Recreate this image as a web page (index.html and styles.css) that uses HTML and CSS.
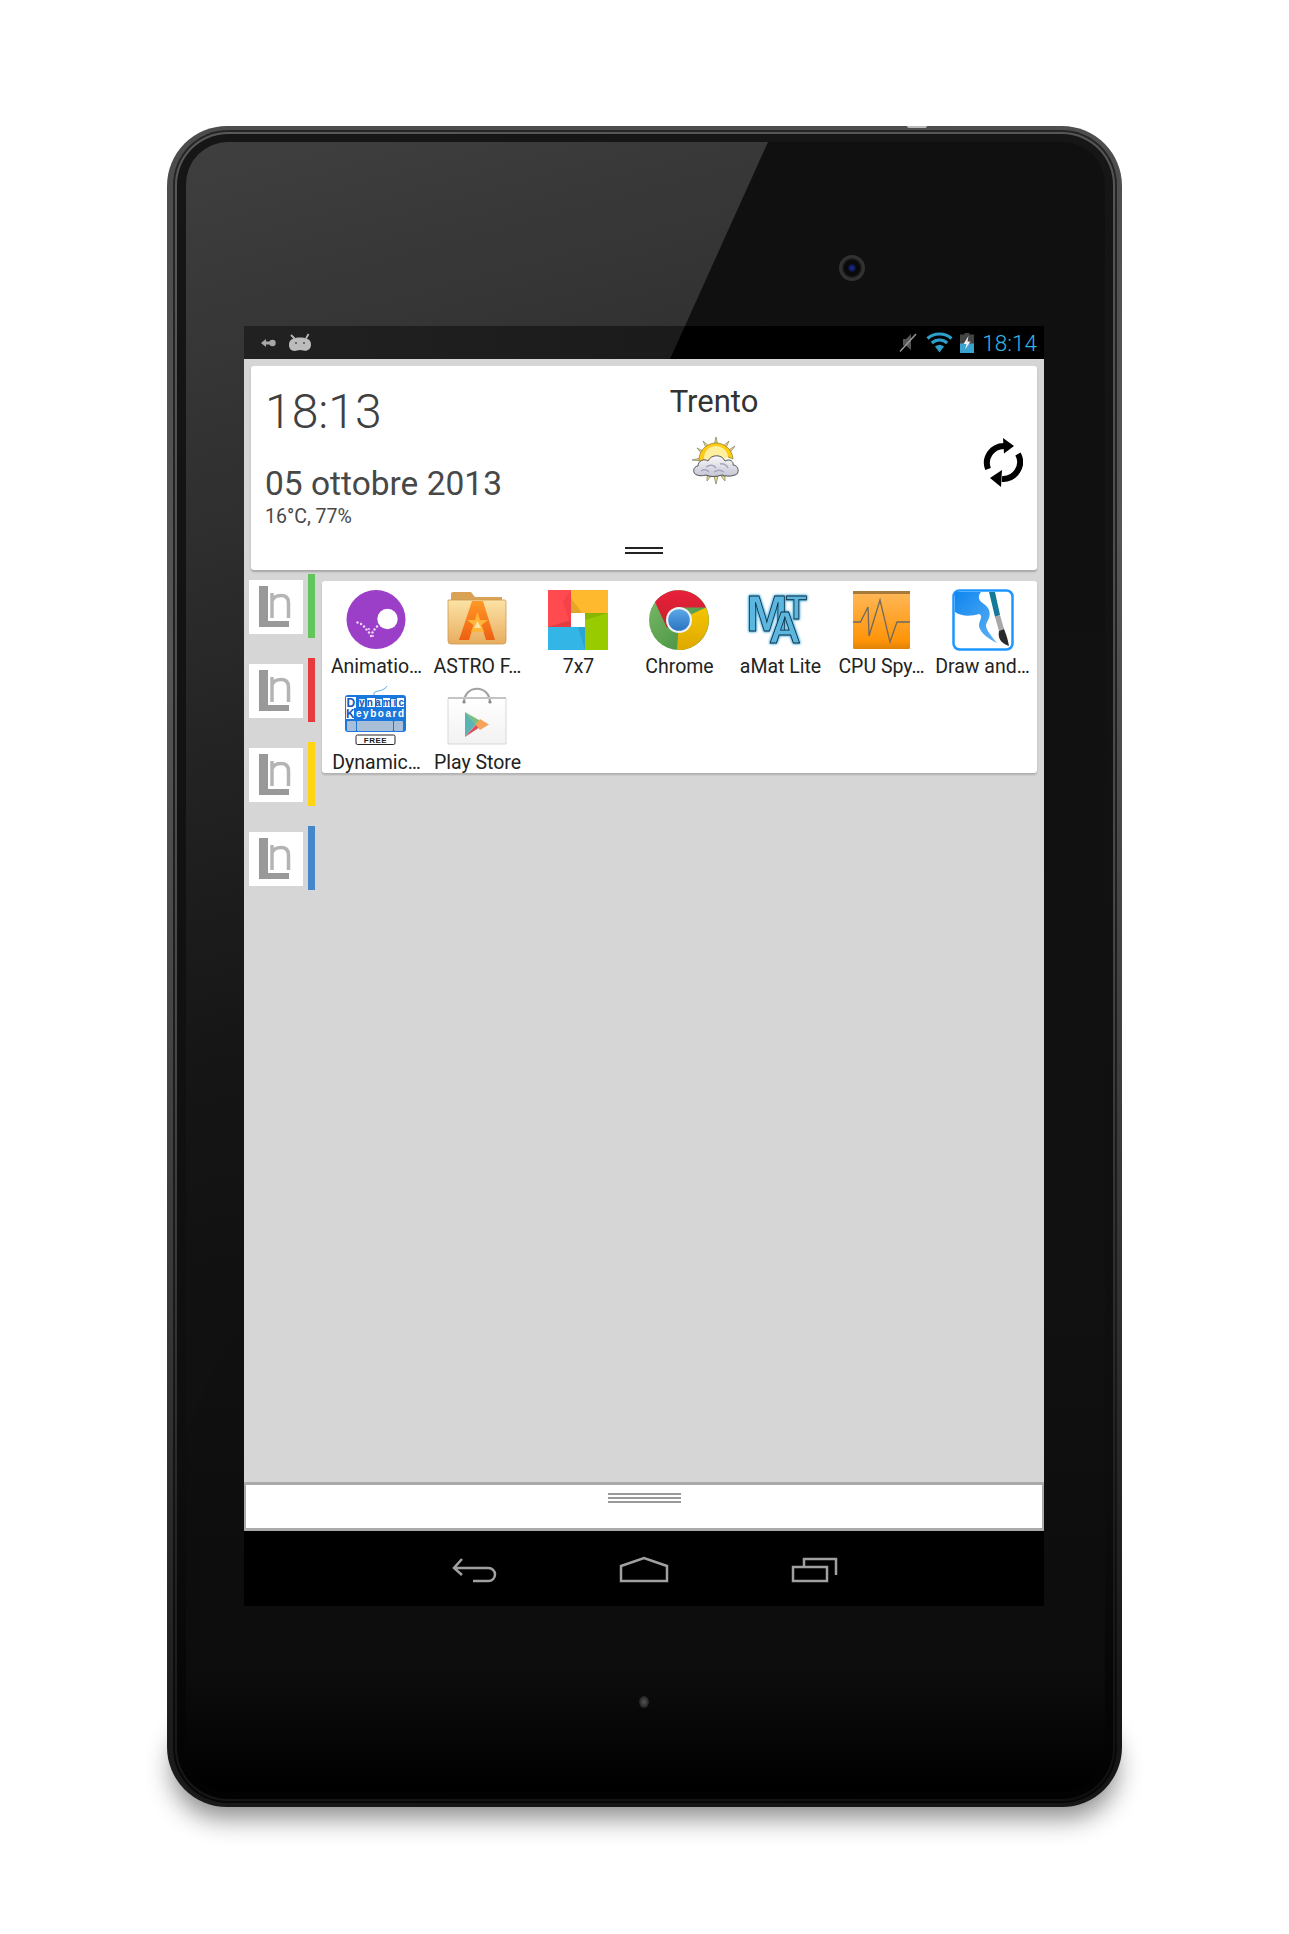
FILE: index.html
```html
<!DOCTYPE html>
<html lang="it">
<head>
<meta charset="utf-8">
<title>Launcher tablet</title>
<link rel="stylesheet" href="styles.css">
</head>
<body>
<svg class="defs" width="0" height="0" aria-hidden="true">
  <symbol id="ln" viewBox="0 0 54 54">
    <path d="M10 6H19V41H40V47H10Z" fill="#999"/>
    <path d="M23 38V13M23 21Q25 15.500 32 15.500Q39.500 15.500 39.500 23V38" fill="none" stroke="#b4b4b4" stroke-width="3.500"/>
  </symbol>
</svg>
<main class="device">
  <div class="notch"></div>
  <div class="groove"><div class="highlight"><div class="inner">
    <div class="bezel">
      <div class="camera"><div class="lens"></div></div>
      <div class="led"></div>
      <div class="screen">
        <header class="status">
          <div class="status-left">
            <svg class="st-usb" width="15" height="10" viewBox="0 0 15 10"><path d="M0 5L5 1V3.500H9V6.500H5V9Z" fill="#a8a8a8"/><circle cx="11.500" cy="5" r="3.200" fill="#a8a8a8"/></svg>
            <svg class="st-droid" width="24" height="19" viewBox="0 0 24 19"><path d="M3 2L6.500 5.500M20.500 1L18 5.500" stroke="#b8b8b8" stroke-width="1.800"/><path d="M1 12C1 6.500 5 4.500 12 4.500C19 4.500 23 6.500 23 11.500C23 16.500 19 18.500 15.500 17.500C13.500 16.800 11 16.800 9 17.500C5 18.800 1 17 1 12Z" fill="#bcbcbc"/><circle cx="8" cy="10" r=".9" fill="#444"/><circle cx="16" cy="10" r=".9" fill="#444"/></svg>
          </div>
          <div class="status-right">
            <svg width="18" height="19" viewBox="0 0 18 19"><path d="M4 6H7L12 1V17L7 12.500H4Z" fill="#555"/><path d="M1 18.500L17 1" stroke="#999" stroke-width="1.500"/></svg>
            <svg class="st-wifi" width="27" height="21" viewBox="0 0 27 21"><g fill="none" stroke="#2f9fca" stroke-width="3.200"><path d="M1.500 6.500C8 .5 19 .5 25.500 6.500"/><path d="M5.800 11C10 7 17 7 21.200 11"/></g><path d="M9 14.500C11.500 12.500 15.500 12.500 18 14.500L13.500 20.500Z" fill="#2f9fca"/></svg>
            <svg class="st-batt" width="14" height="20" viewBox="0 0 14 20"><path d="M4.500 0H9.500V1.500H14V20H0V1.500H4.500Z" fill="#444"/><path d="M0 10.500H14V20H0Z" fill="#3ba3cf"/><path d="M8.500 3L3.500 11H6.500L5 16.500L10.500 8.500H7.500Z" fill="#eee"/></svg>
            <span class="clock">18:14</span>
          </div>
        </header>
        <div class="content">
          <section class="widget">
            <div class="widget-top">
              <div class="widget-date">
                <div class="time">18:13</div>
                <div class="date">05 ottobre 2013</div>
                <div class="temp">16°C, 77%</div>
              </div>
              <div class="widget-weather">
                <div class="city">Trento</div>
                <svg class="weather-icon" width="48" height="47" viewBox="0 0 48 47">
                  <defs><linearGradient id="cl" x1="0" y1="0" x2="0" y2="1"><stop offset="0" stop-color="#fafafa"/><stop offset="1" stop-color="#c4c4d6"/></linearGradient></defs>
                  <g stroke="#8a8a70" stroke-width=".8" fill="#f0dc80"><path d="M24 0L26 9H22Z"/><path d="M11 4L18 10L15 13Z"/><path d="M37 4L33 13L30 10Z"/><path d="M5 11L13 15L11 18Z"/><path d="M43 9L37 17L35 14Z"/><path d="M0 23L9 21V24Z"/><path d="M24 47L22 39H26Z"/><path d="M15 44L15 39H19Z"/><path d="M33 44L29 39H33Z"/></g>
                  <path d="M7 24A17 17 0 0 1 41 22L36 20A13 13 0 0 0 12 24Z" fill="#ffc914" stroke="#8a7a30" stroke-width=".7"/>
                  <path d="M12 22A12 12 0 0 1 36 20L30 24H14Z" fill="#fff0a0"/>
                  <path d="M5 38C0 37 1 29 6 29C6 24 12 21 16 24C19 17 30 17 33 24C38 21 42 25 41 28C47 28 48 37 43 38C38 40 33 39 30 38C24 40 18 40 14 38C11 39 7 39 5 38Z" fill="url(#cl)" stroke="#555" stroke-width="1"/>
                  <path d="M14 30C18 27 22 28 24 31M28 27C31 26 35 28 36 31M9 34C12 32 15 33 17 35M22 35C25 33 29 33 32 35" fill="none" stroke="#a5a5bb" stroke-width="1.500"/>
                </svg>
              </div>
              <div class="widget-refresh">
                <svg width="40" height="50" viewBox="0 0 40 50"><g fill="none" stroke="#000" stroke-width="6"><path d="M21 8A17 17 0 0 0 5 31"/><path d="M19 41A17 17 0 0 0 35 16"/></g><path d="M20 0L31 8L21 15.500Z" fill="#000"/><path d="M19 32L7 40L18 49Z" fill="#000"/></svg>
              </div>
            </div>
            <div class="grip"></div>
          </section>
          <div class="main-row">
            <nav class="rail">
              <div class="rail-item"><svg class="tile" width="54" height="54"><use href="#ln"/></svg><span class="bar bar-green"></span></div>
              <div class="rail-item"><svg class="tile" width="54" height="54"><use href="#ln"/></svg><span class="bar bar-red"></span></div>
              <div class="rail-item"><svg class="tile" width="54" height="54"><use href="#ln"/></svg><span class="bar bar-yellow"></span></div>
              <div class="rail-item"><svg class="tile" width="54" height="54"><use href="#ln"/></svg><span class="bar bar-blue"></span></div>
            </nav>
            <section class="apps">
              <div class="app">
                <svg class="icon" width="60" height="60" viewBox="0 0 60 60"><circle cx="30" cy="29.500" r="29.500" fill="#9c3fc8"/><circle cx="41.500" cy="29" r="10.200" fill="#fff"/><g fill="#f0d8f8"><circle cx="11.500" cy="32.500" r="1.200"/><circle cx="15" cy="34" r="1.200"/><circle cx="18" cy="36.500" r="1.200"/><circle cx="20.500" cy="39.500" r="1.200"/><circle cx="23" cy="42.500" r="1.200"/><circle cx="25" cy="46" r="1.200"/><circle cx="26.500" cy="42.500" r="1.200"/><circle cx="28.500" cy="39.500" r="1.200"/><circle cx="31" cy="36.500" r="1.200"/><circle cx="23" cy="39" r="1"/><circle cx="27" cy="46" r="1"/></g></svg>
                <span class="label">Animatio…</span>
              </div>
              <div class="app">
                <svg class="icon" width="60" height="60" viewBox="0 0 60 60"><defs><linearGradient id="fo" x1="0" y1="0" x2="0" y2="1"><stop offset="0" stop-color="#fde3a6"/><stop offset="1" stop-color="#e7ad5f"/></linearGradient><linearGradient id="as" x1="0" y1="0" x2="0" y2="1"><stop offset="0" stop-color="#ff9a26"/><stop offset="1" stop-color="#ee5f12"/></linearGradient></defs><path d="M4 10V4Q4 2 6 2H24L28 7H55V12H4Z" fill="#d9a255"/><path d="M1 10H58Q59 10 59 12V51Q59 54 56 54H4Q1 54 1 51V12Q1 10 1 10Z" fill="url(#fo)" stroke="#c99a52" stroke-width=".8"/><path d="M25 11H36L48 50H39L36.500 42H24.500L22 50H12Z" fill="url(#as)"/><path d="M30.500 22L33 30H41L34.500 35L37 42H24L26.500 35L20 30H28Z" fill="#ffb43a"/><path d="M30.500 31L34 38H27Z" fill="#fde3a6"/></svg>
                <span class="label">ASTRO F…</span>
              </div>
              <div class="app">
                <svg class="icon" width="60" height="60" viewBox="0 0 60 60"><path d="M0 0H23V37H0Z" fill="#ff4a4f"/><path d="M23 0H60V23H23Z" fill="#ffb92e"/><path d="M37 23H60V60H37Z" fill="#99cc00"/><path d="M0 37H37V60H0Z" fill="#33b5e5"/><path d="M0 37L23 30V37Z" fill="#e23c44"/><path d="M23 0V37L15 12Z" fill="#f23f46" opacity=".8"/><path d="M23 23L34 23L23 8Z" fill="#e5a52a"/><path d="M37 23H60L37 30Z" fill="#88b500"/><path d="M37 37V60L30 37Z" fill="#2ba3d3"/><path d="M23 23H37V37H23Z" fill="#fff"/></svg>
                <span class="label">7x7</span>
              </div>
              <div class="app">
                <svg class="icon" width="60" height="60" viewBox="0 0 60 60"><defs><linearGradient id="cr" x1="0" y1="0" x2="0" y2="1"><stop offset="0" stop-color="#e8203c"/><stop offset="1" stop-color="#c8202c"/></linearGradient><linearGradient id="cy" x1="0" y1="0" x2="0" y2="1"><stop offset="0" stop-color="#f4c400"/><stop offset="1" stop-color="#dfa900"/></linearGradient><linearGradient id="cg" x1="0" y1="0" x2="1" y2="1"><stop offset="0" stop-color="#7cbc6a"/><stop offset="1" stop-color="#3d8a3a"/></linearGradient><linearGradient id="cb" x1="0" y1="0" x2="0" y2="1"><stop offset="0" stop-color="#5aa8e8"/><stop offset="1" stop-color="#2c74c0"/></linearGradient></defs><circle cx="30" cy="30" r="30" fill="url(#cg)"/><path d="M30 30L57 17.500A30 30 0 0 1 28 60Z" fill="url(#cy)"/><path d="M6 12A30 30 0 0 1 57 17.500H30L18 38Z" fill="url(#cr)"/><circle cx="30" cy="30" r="13" fill="#eef2f6"/><circle cx="30" cy="30" r="10.800" fill="url(#cb)"/></svg>
                <span class="label">Chrome</span>
              </div>
              <div class="app">
                <svg class="icon amat" width="66" height="60" viewBox="0 0 66 60"><text class="amat-text"><tspan class="amat-m" x="-1" y="41">M</tspan><tspan class="amat-t" x="39" y="29">T</tspan><tspan class="amat-a" x="22" y="53">A</tspan></text></svg>
                <span class="label">aMat Lite</span>
              </div>
              <div class="app">
                <svg class="icon icon-cpu" width="60" height="60" viewBox="0 0 60 60"><defs><linearGradient id="cp" x1="0" y1="0" x2="0" y2="1"><stop offset="0" stop-color="#ffb85a"/><stop offset=".85" stop-color="#ff9408"/><stop offset="1" stop-color="#e08408"/></linearGradient></defs><rect x="1" y="1" width="57" height="58" rx="1.500" fill="url(#cp)"/><rect x="1" y="1" width="57" height="3" fill="#a87a3a"/><path d="M1 32H8.500L16 17L17 46L28 10L38 52L45 32H58" fill="none" stroke="#6e6a5e" stroke-width="1.300"/></svg>
                <span class="label">CPU Spy…</span>
              </div>
              <div class="app">
                <svg class="icon icon-draw" width="62" height="62" viewBox="0 0 62 62"><defs><linearGradient id="br" x1="0" y1="0" x2="1" y2="1"><stop offset="0" stop-color="#0f86ee"/><stop offset="1" stop-color="#5fb2f5"/></linearGradient></defs><rect x="1.500" y="1.500" width="59" height="59" rx="6" fill="#fff" stroke="#1e96ff" stroke-width="2.500"/><path d="M3 3H29C25 8 27 12 32 15C39 20 39 27 35 33C32 38 36 43 45 54C37 50 28 44 27 37C27 31 32 27 27 25C20 27 10 28 3 23Z" fill="url(#br)"/><path d="M37 3L43 3L48 26L43 28Z" fill="#14799a"/><path d="M43 28L48 26L52 40L47 42Z" fill="#a8a8a8"/><path d="M47 42L52 40C55 47 56 52 57 57C52 55 45 52 47 42Z" fill="#2a2a2a"/></svg>
                <span class="label">Draw and…</span>
              </div>
              <div class="app">
                <svg class="icon" width="62" height="60" viewBox="0 0 62 60"><path d="M29 10C28 4 33 6 37 4C39 3 41 2 42 0" fill="none" stroke="#3aa5dc" stroke-width=".9"/><rect x="0" y="9" width="61" height="37" rx="3" fill="#1a78dc"/><rect x="1" y="11" width="10" height="11" fill="#fff"/><rect x="1" y="22" width="8" height="11" fill="#fff"/><g fill="#dbe9f8"><rect x="14" y="13" width="6" height="8"/><rect x="22" y="12" width="8" height="9" fill="#fff"/><rect x="31" y="13" width="6" height="8"/><rect x="38" y="12" width="7" height="9" fill="#fff"/><rect x="46" y="13" width="5" height="8"/><rect x="52" y="12" width="7" height="9" fill="#fff"/></g><text class="dk dk-big" x="1.500" y="21">D</text><text class="dk" x="14" y="20" textLength="45">ynamic</text><text class="dk dk-big" x="1" y="32">K</text><text class="dk dk-w" x="11" y="31" textLength="48">eyboard</text><g fill="#a9bfd8"><rect x="2" y="35" width="9" height="10" rx="1"/><rect x="12" y="35" width="36" height="10" rx="1"/><rect x="49" y="35" width="9" height="10" rx="1"/></g><rect x="11" y="49" width="39" height="9.500" rx="1.500" fill="#fff" stroke="#222" stroke-width="1"/><text class="dk-free" x="30.500" y="57">FREE</text></svg>
                <span class="label">Dynamic…</span>
              </div>
              <div class="app">
                <svg class="icon" width="60" height="60" viewBox="0 0 60 60"><defs><linearGradient id="bg1" x1="0" y1="0" x2="0" y2="1"><stop offset="0" stop-color="#fff"/><stop offset="1" stop-color="#f2f2f2"/></linearGradient></defs><path d="M1 12H59V58H1Z" fill="url(#bg1)" stroke="#d8d8d8" stroke-width="1"/><path d="M17 17C17 -2 43 -2 43 17" fill="none" stroke="#a2a2a2" stroke-width="2.200"/><path d="M1 11H59V13H1Z" fill="#c4c4c4"/><circle cx="17" cy="16" r="1.600" fill="#8a8a8a"/><circle cx="43" cy="16" r="1.600" fill="#8a8a8a"/><path d="M18 26L29 38L18 51Z" fill="#5ab4b4"/><path d="M18 26L37 37L33 40.500L29 38.500Z" fill="#7cbf7e"/><path d="M18 51L29 38.500L33 41L18 51Z" fill="#dd4b5f"/><path d="M33 33L42 38.500L33 44L28.500 38.500Z" fill="#f5a35a"/></svg>
                <span class="label">Play Store</span>
              </div>
            </section>
          </div>
        </div>
        <div class="dock"><div class="dock-grip"></div></div>
        <footer class="nav">
          <svg class="nav-icon" width="50" height="30" viewBox="0 0 50 30"><path d="M13 4L5 13L13 20M5 13H39.500A6.500 6.500 0 0 1 39.500 26H24"/></svg>
          <svg class="nav-icon" width="50" height="30" viewBox="0 0 50 30"><path d="M2 11L25 3L48 11V26H2Z"/></svg>
          <svg class="nav-icon" width="50" height="30" viewBox="0 0 50 30"><path d="M4 12H38V26H4ZM15 12V4H47V20"/></svg>
        </footer>
      </div>
    </div>
  </div></div></div>
</main>
</body>
</html>
```
FILE: styles.css
```css
* { box-sizing: border-box; }
html { margin: 0; padding: 0; background: #fff; }
body { margin: 0; width: 1289px; height: 1934px; overflow: hidden; font-family: Roboto, "Liberation Sans", sans-serif; padding: 126px 0 0 167px; }
.defs { position: absolute; }

.device { position: relative; width: 955px; height: 1681px; border-radius: 60px; padding: 4px 5px 4px 6px;
  background: linear-gradient(172deg, #4c4c4c 0%, #555 30%, #383838 65%, #161616 95%); }
.device::before { content: ""; position: absolute; z-index: -1; left: 10px; right: 10px; bottom: 3px; height: 90px; border-radius: 50px;
  box-shadow: 0 9px 26px 5px rgba(0,0,0,.46); }
.notch { position: absolute; top: 0; left: 740px; width: 20px; height: 1.500px; background: #bbb; border-radius: 0 0 10px 10px; }
.groove { height: 100%; padding: 2px; border-radius: 55px; background: linear-gradient(180deg, #252525, #1a1a1a 70%, #060606); }
.highlight { height: 100%; padding: 2px; border-radius: 53px; background: linear-gradient(172deg, #585858, #484848 50%, #1c1c1c 85%, #101010); }
.inner { height: 100%; padding: 8px 8px 7px 9px; border-radius: 51px; background: linear-gradient(180deg, #161616, #0e0e0e 80%, #020202); }

.bezel { position: relative; height: 100%; padding: 184px 61px 186px 58px; border-radius: 42px; overflow: hidden;
  background: linear-gradient(180deg, #101010 0, #111 70%, #0c0c0c 93%, #000 100%); }
.bezel::before { content: ""; position: absolute; inset: 0; clip-path: polygon(0 0, 582px 0, 0 1289px);
  background: linear-gradient(165deg, #3f3f3f 0, #2f2f2f 20%, #222 34%, #161616 48%, #111 60%, #111 100%); }

.camera { position: absolute; left: 653px; top: 113px; width: 26px; height: 26px; border-radius: 50%; display: flex; align-items: center; justify-content: center;
  background: radial-gradient(circle, #0a0a0a 0 42%, #333 58%, #2c2c2c 85%, #151515 100%); }
.lens { width: 8px; height: 8px; border-radius: 50%; background: radial-gradient(circle, #1a2fa0 0, #0c1030 70%, #050505 100%); }
.led { position: absolute; left: 453px; top: 1554px; width: 10px; height: 12px; border-radius: 50%; background: radial-gradient(ellipse, #555 0, #111 95%); }

.screen { position: relative; width: 800px; height: 1280px; display: flex; flex-direction: column; background: #d6d6d6; }

.status { position: relative; z-index: 0; height: 33px; flex: none; display: flex; align-items: center; justify-content: space-between; background: #000; padding-left: 17px; padding-right: 7px; }
.status::before { content: ""; position: absolute; z-index: -1; inset: 0; clip-path: polygon(0 0, 441px 0, 426px 100%, 0 100%); background: linear-gradient(90deg, #212121, #161616); }
.status-left { display: flex; align-items: center; gap: 12px; }
.status-right { display: flex; align-items: center; gap: 8px; color: #33b5e5; }
.clock { font-size: 22.500px; font-weight: 300; line-height: 33px; margin-top: 2px; }
.st-wifi { margin-left: 1px; }
.st-batt { margin-left: -1px; }

.content { flex: 1; padding-top: 7px; display: flex; flex-direction: column; }

.widget { margin: 0 7px; height: 204px; flex: none; background: #fff; border-radius: 3px; box-shadow: 0 2px 2px rgba(0,0,0,.22); display: flex; flex-direction: column; }
.widget-top { height: 181px; flex: none; display: grid; grid-template-columns: 300px 326px 1fr; }
.widget-date { padding-left: 14px; color: #484848; font-weight: 400; }
.time { font-size: 48px; line-height: 56px; margin-top: 18px; font-weight: 300; color: #404040; }
.date { font-size: 33.500px; line-height: 40px; margin-top: 24px; }
.temp { font-size: 19.500px; line-height: 24px; margin-top: 1px; }
.widget-weather { display: flex; flex-direction: column; align-items: center; }
.city { font-size: 31px; line-height: 36px; margin-top: 18px; color: #333; }
.weather-icon { margin: 17px 0 0 3px; }
.widget-refresh { display: flex; justify-content: flex-end; padding: 72px 14px 0 0; }
.grip { width: 38px; height: 7px; margin: 0 auto; border-top: 2px solid #222; border-bottom: 2px solid #222; }

.main-row { flex: 1; display: flex; gap: 7px; padding: 4px 7px 0 5px; align-items: flex-start; }
.rail { display: flex; flex-direction: column; gap: 20px; width: 66px; flex: none; }
.rail-item { display: flex; align-items: center; gap: 5px; height: 64px; }
.tile { background: #fff; flex: none; margin-top: 2px; }
.bar { width: 7px; height: 64px; flex: none; }
.bar-green { background: #62c65c; }
.bar-red { background: #e73a3c; }
.bar-yellow { background: #ffd412; }
.bar-blue { background: #4488cc; }

.apps { flex: 1; height: 192px; margin-top: 7px; background: #fff; border-radius: 3px; box-shadow: 0 2px 2px rgba(0,0,0,.18);
  padding: 9px 4px 0 4px; display: grid; grid-template-columns: repeat(7, 101px); grid-auto-rows: 87px; row-gap: 9px; }
.app { display: flex; flex-direction: column; align-items: center; }
.icon { display: block; flex: none; height: 60px; margin-right: 2px; }
.icon-cpu { margin-right: 0; }
.icon-draw { height: 62px; margin: -1px 0 -1px; }
.label { font-size: 19.500px; line-height: 22px; color: #222; margin-top: 6px; white-space: nowrap; }

.amat { overflow: visible; filter: drop-shadow(0 0 1.200px #4fb0e0) drop-shadow(0 0 1.200px #4fb0e0); }
.amat-text { font-family: "Liberation Sans", sans-serif; font-weight: 700; fill: #5bb7e0; stroke: #0e2a3a; stroke-width: .8; }
.amat-m { font-size: 50px; }
.amat-t { font-size: 34px; }
.amat-a { font-size: 44px; }
.dk { font-family: "Liberation Sans", sans-serif; font-weight: 700; font-size: 10px; fill: #1a58b8; }
.dk-w { fill: #fff; }
.dk-big { font-size: 12px; }
.dk-free { font-family: "Liberation Sans", sans-serif; font-weight: 700; font-size: 8px; fill: #222; text-anchor: middle; letter-spacing: .5px; }

.dock { height: 49px; flex: none; background: #fff; border: solid #aaa; border-width: 3px 2px; padding-top: 8px; }
.dock-grip { width: 73px; height: 10px; margin: 0 auto; background: repeating-linear-gradient(180deg, #999 0 2px, #fff 2px 4px); }

.nav { height: 75px; flex: none; background: #000; display: flex; justify-content: center; gap: 120px; padding-top: 24px; }
.nav-icon { fill: none; stroke: #a0a0a0; stroke-width: 2.500; }
```
